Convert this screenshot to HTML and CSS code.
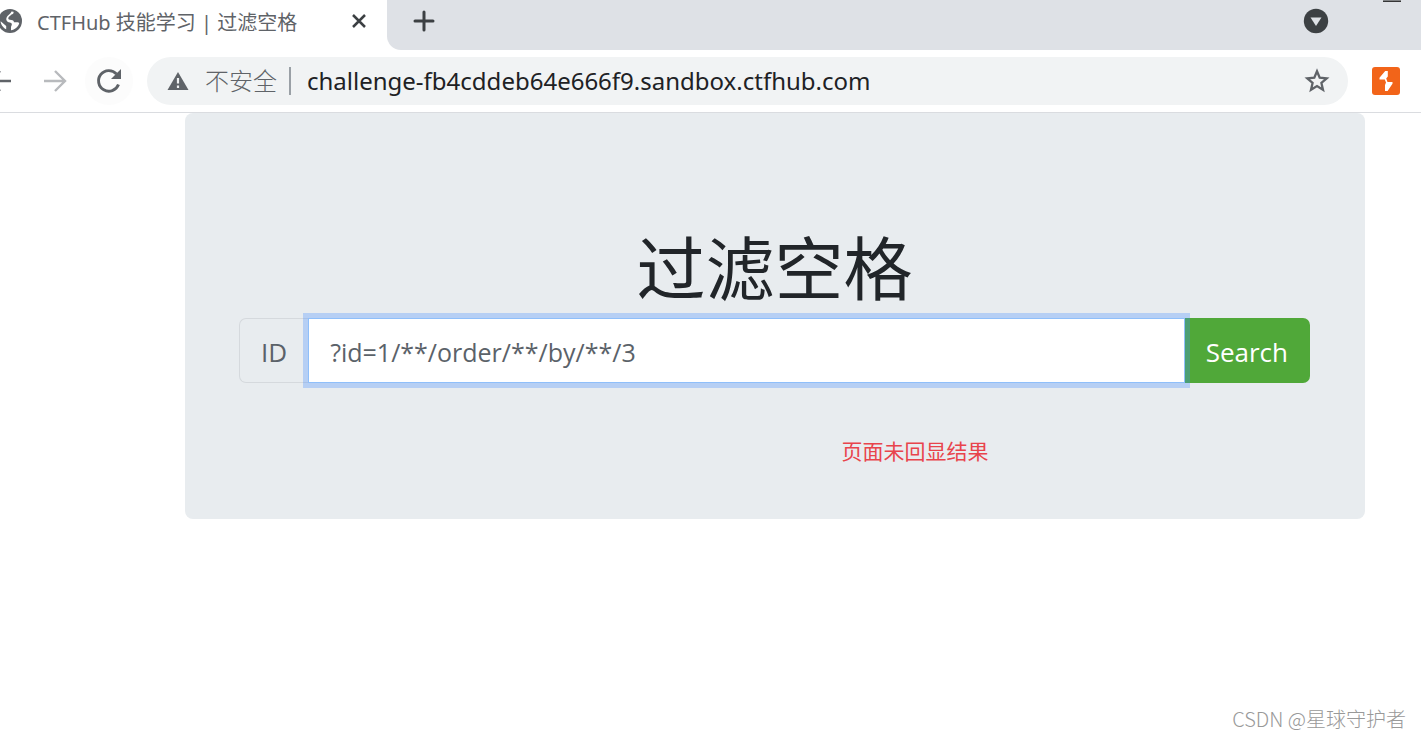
FILE: index.html
```
<!DOCTYPE html>
<html lang="zh-CN">
<head>
<meta charset="utf-8">
<meta name="viewport" content="width=device-width, initial-scale=1">
<title>CTFHub 技能学习 | 过滤空格</title>
<link rel="stylesheet" href="styles.css">
</head>
<body>
<header class="browser">
  <div class="tab-strip">
    <div class="tab">
      <svg class="favicon" viewBox="0 0 24 24" aria-hidden="true"><circle cx="12" cy="12" r="12" fill="#5f6368"/><path d="M15.500 2.800c.5 1.600-.6 2.500-2.500 2.900-.8 1.400-2.300 1.700-2.700 3.400-.2 1.500 1 1.800 3 1.900 2 .2 2.600 1 2.700 2.300h3.500c1 0 1.600.6 1.700 1.300-1.200 3.400-4.400 6.200-8.200 6.700v-3.200c.2-1.200 1-2 .8-3.300-.6-1.500-3-1-4.500-2.200-1.500-1.300-1.300-3.800.2-5.500 1.500-1.600 3-2 4-4.500z" fill="#fff"/><path d="M2.600 12.300l5.600 4.800v3.200c-3-1.300-5.400-4.500-5.600-8z" fill="#fff"/></svg>
      <span class="tab-title">CTFHub 技能学习 | 过滤空格</span>
      <button class="icon-button tab-close" type="button" aria-label="关闭标签页"><svg width="16" height="16" viewBox="0 0 16 16"><path d="M2 2l12 12M14 2L2 14" stroke="#3c4043" stroke-width="2.500"/></svg></button>
    </div>
    <button class="icon-button new-tab" type="button" aria-label="新标签页"><svg width="22" height="22" viewBox="0 0 22 22"><path d="M11 2v18M2 11h18" stroke="#3c4043" stroke-width="3" stroke-linecap="round"/></svg></button>
    <div class="window-controls">
      <button class="icon-button" type="button" aria-label="搜索标签页"><svg width="26" height="26" viewBox="0 0 26 26"><circle cx="13" cy="13" r="12.200" fill="#3c4043"/><path d="M7.500 9.500h11L13 18z" fill="#dee1e6"/></svg></button>
      <button class="icon-button minimize" type="button" aria-label="最小化"><svg width="18" height="2" viewBox="0 0 18 2"><path d="M0 1.200h18" stroke="#222" stroke-width="1.400"/></svg></button>
    </div>
  </div>
  <div class="toolbar">
    <nav class="nav-buttons" aria-label="导航">
      <button class="icon-button back" type="button" aria-label="后退"><svg width="12" height="24" viewBox="12 0 12 24"><path d="M11 12h12M12 2L3 12l9 10" stroke="#5f6368" stroke-width="2.400" fill="none"/></svg></button>
      <button class="icon-button forward" type="button" aria-label="前进"><svg width="24" height="24" viewBox="0 0 24 24"><path d="M1 12h21M12 2l10 10-10 10" stroke="#b8babd" stroke-width="2.400" fill="none"/></svg></button>
      <button class="icon-button reload" type="button" aria-label="重新加载"><svg width="26" height="26" viewBox="0 0 26 26"><path d="M22.500 16.500A10.300 10.300 0 1 1 20.500 6" stroke="#5f6368" stroke-width="2.900" fill="none"/><path d="M25 1v10H15z" fill="#5f6368"/></svg></button>
    </nav>
    <div class="address-bar">
      <svg width="22" height="20" viewBox="0 0 22 20" aria-hidden="true"><path d="M11 1l10.500 18H.5z" fill="#5f6368"/><path d="M11 7v5.500M11 14.500V17" stroke="#f1f3f4" stroke-width="2.200"/></svg>
      <span class="security">不安全</span>
      <input class="url" type="text" aria-label="地址" value="challenge-fb4cddeb64e666f9.sandbox.ctfhub.com">
      <button class="icon-button" type="button" aria-label="收藏"><svg width="26" height="26" viewBox="0 0 26 26"><path d="M13 3.200l2.700 6.500 7 .6-5.300 4.600 1.600 6.900-6-3.700-6 3.700 1.600-6.900-5.300-4.600 7-.6z" stroke="#5f6368" stroke-width="2.300" fill="none"/></svg></button>
    </div>
    <button class="icon-button extension" type="button" aria-label="扩展程序"><svg width="28" height="28" viewBox="0 0 28 28"><rect width="28" height="28" rx="3" fill="#f26419"/><path d="M13.200 4h2.600v5.500l-1.600 2 1.300 3.500h5v1.800L15.600 24H13v-6l1-2.500-1.200-3H7.500v-1.700z" fill="#fff"/></svg></button>
  </div>
</header>
<main class="panel">
  <h1 class="heading">过滤空格</h1>
  <form class="search">
    <label class="prefix" for="query">ID</label>
    <input class="query" id="query" type="text" value="?id=1/**/order/**/by/**/3">
    <button class="submit" type="submit">Search</button>
  </form>
  <p class="note">页面未回显结果</p>
</main>
<footer class="watermark">CSDN @星球守护者</footer>
</body>
</html>
```
FILE: styles.css
```
* { box-sizing: border-box; }

body {
  margin: 0;
  min-height: 100vh;
  display: flex;
  flex-direction: column;
  background: #fff;
  font-family: "Open Sans", "Noto Sans CJK SC", sans-serif;
  color: #212529;
}

.icon-button {
  display: flex;
  align-items: center;
  justify-content: center;
  flex: none;
  padding: 0;
  border: 0;
  background: none;
}

.browser { border-bottom: 1px solid #dadce0; }

.tab-strip {
  display: flex;
  height: 50px;
  background: linear-gradient(to right, #fff 50%, #dee1e6 50%);
}

.tab {
  display: flex;
  align-items: center;
  width: 387px;
  padding: 0 20px 8px 0;
  background: #fff;
}

.favicon {
  flex: none;
  width: 24px;
  height: 24px;
  margin-left: -2px;
}

.tab-title {
  flex: 1;
  padding-left: 15px;
  font-family: "Noto Sans", "Noto Sans CJK SC", sans-serif;
  font-size: 20px;
  color: #5f6368;
  white-space: nowrap;
}

.new-tab {
  width: 74px;
  padding-bottom: 8px;
  border-bottom-left-radius: 14px;
  background: #dee1e6;
}

.window-controls {
  flex: 1;
  display: flex;
  justify-content: flex-end;
  gap: 54px;
  padding: 0 20px 8px 0;
  background: #dee1e6;
}

.minimize { align-self: flex-start; }

.toolbar {
  display: flex;
  align-items: center;
  height: 62px;
  padding-right: 21px;
}

.nav-buttons {
  display: flex;
  align-items: center;
}

.forward { margin-left: 31px; }

.reload {
  width: 48px;
  height: 48px;
  margin: 0 14px 0 18px;
  border-radius: 50%;
  background: #fcfcfc;
}

.address-bar {
  flex: 1;
  display: flex;
  align-items: center;
  height: 48px;
  margin-right: 24px;
  padding: 0 18px 0 20px;
  border-radius: 24px;
  background: #f1f3f4;
}

.security {
  margin-left: 16px;
  padding-right: 12px;
  border-right: 2px solid #9aa0a6;
  font-size: 24px;
  font-weight: 300;
  line-height: 28px;
  color: #5f6368;
}

.url {
  flex: 1;
  min-width: 0;
  padding: 0 0 2px 16px;
  border: 0;
  background: none;
  font: 24px "Noto Sans", sans-serif;
  color: #202124;
}

.panel {
  margin: 0 56px 0 185px;
  padding: 114px 55px 53px 54px;
  border-radius: 8px;
  background: #e8ecef;
}

.heading {
  margin: 0 0 9px;
  font-size: 69px;
  font-weight: 400;
  line-height: 82px;
  text-align: center;
}

.search {
  display: flex;
  height: 65px;
}

.prefix {
  display: flex;
  align-items: center;
  padding: 2px 21px 0;
  border: 1px solid #d5d9dd;
  border-right: 0;
  border-radius: 7px 0 0 7px;
  font-size: 26px;
  color: #5b6269;
}

.query {
  position: relative;
  flex: 1;
  min-width: 0;
  padding: 3px 21px 0;
  border: 1px solid #8fbffa;
  border-radius: 0;
  outline: 0;
  box-shadow: 0 0 0 5px rgba(65, 140, 255, .3);
  background: #fff;
  font: 25px "Open Sans", sans-serif;
  color: #5b6269;
}

.submit {
  padding: 2px 22px 0 21px;
  border: 0;
  border-radius: 0 7px 7px 0;
  background: #50a839;
  font: 26px "Open Sans", sans-serif;
  color: #fff;
}

.note {
  margin: 51px 0 0;
  padding-left: 281px;
  font-family: "Noto Sans CJK SC", sans-serif;
  font-size: 21px;
  line-height: 32px;
  text-align: center;
  color: #e8444c;
}

.watermark {
  margin-top: auto;
  padding: 0 15px 4px;
  font-family: "Noto Sans CJK SC", sans-serif;
  font-weight: 300;
  font-size: 20px;
  line-height: 30px;
  text-align: right;
  color: #999;
}
```
